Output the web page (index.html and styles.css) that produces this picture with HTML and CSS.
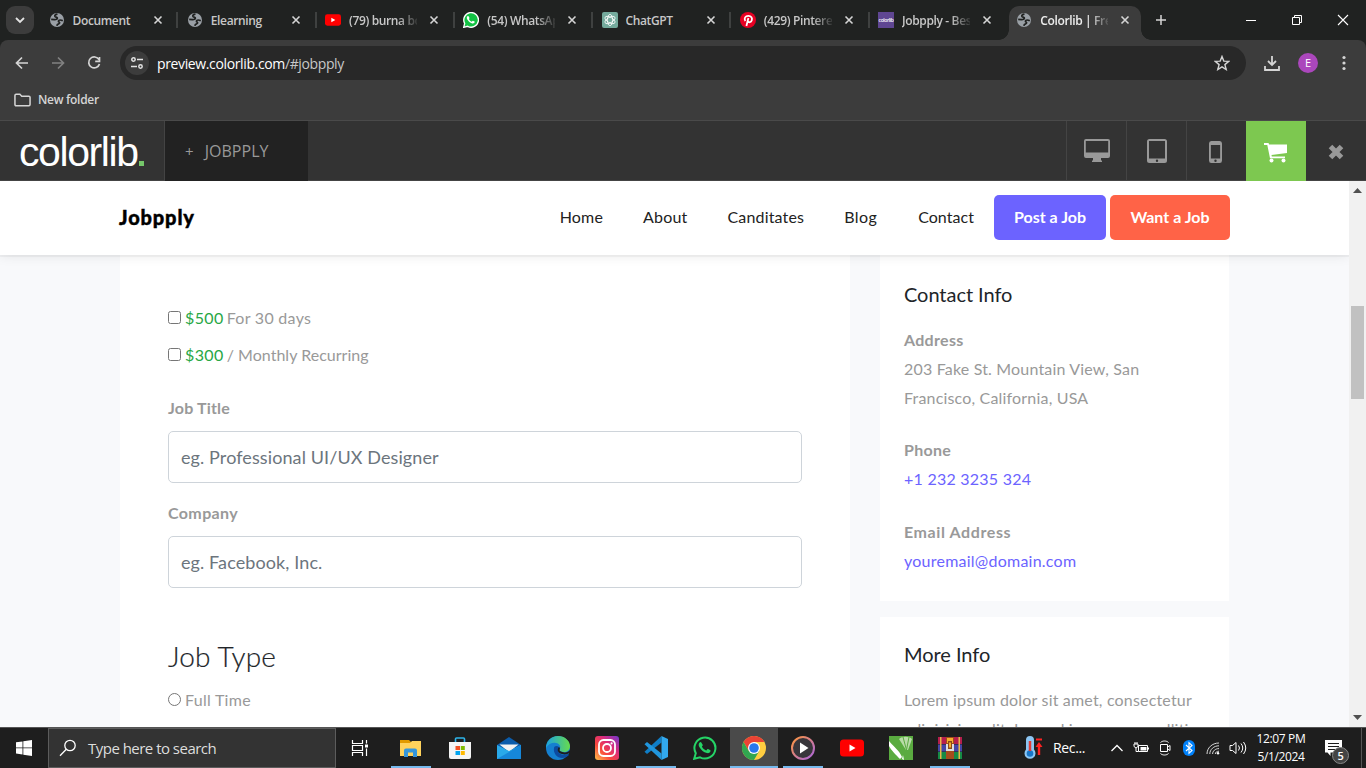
FILE: index.html
```html
<!DOCTYPE html>
<html lang="en">
<head>
<meta charset="utf-8">
<title>Colorlib | Jobpply</title>
<link rel="stylesheet" href="styles.css">
</head>
<body>
<svg width="0" height="0" class="defs">
  <symbol id="globe" viewBox="0 0 16 16"><circle cx="8" cy="8" r="7" fill="#9aa0a6"/><path d="M8.500 2.200c-2 .2-3 1.200-2.600 2.200.5 1 2.400.6 2.500 1.700 0 1-1.400 1.700-3 1.500L2.200 7.300M13.800 8.200c-1.200.6-1.800-.4-3-.2-1.500.2-1.800 1.600-.8 2.100 1.200.6.400 1.700-.8 2-.8.2-1.200.8-1.300 1.700" fill="none" stroke="#202221" stroke-width="1.700"/></symbol>
  <symbol id="x" viewBox="0 0 16 16"><path d="M4.500 4.500l7 7M11.500 4.500l-7 7" stroke="#d5d5d5" stroke-width="1.600"/></symbol>
  <symbol id="yt" viewBox="0 0 24 18"><rect y="0.500" width="24" height="17" rx="3.500" fill="#f00"/><path d="M9.500 5.500v7l6-3.500z" fill="#fff"/></symbol>
  <symbol id="phone" viewBox="0 0 24 24"><path d="M8.300 6.500c-.5-.9-1.100-.7-1.700-.1-1.200 1.200-1.200 3-.1 4.800 1.700 2.900 4.100 5 7.300 5.900 2 .5 3.600-.6 3.800-2.300 0-.6-2.300-1.900-2.900-1.700-.7.300-1 1.500-1.600 1.400-1.700-.6-3.300-2-4.100-3.700-.2-.6.900-1 .8-1.700z"/></symbol>
</svg>

<div class="screen">
  <header class="tabs">
    <button class="tab-search"><svg width="12" height="12" viewBox="0 0 12 12"><path d="M2 4l4 4 4-4" fill="none" stroke="#e3e3e3" stroke-width="1.800"/></svg></button>
    <div class="tab"><svg class="fav"><use href="#globe"/></svg><span>Document</span><svg class="close"><use href="#x"/></svg></div>
    <div class="tab"><svg class="fav"><use href="#globe"/></svg><span>Elearning</span><svg class="close"><use href="#x"/></svg></div>
    <div class="tab"><svg class="fav"><use href="#yt"/></svg><span class="fade">(79) burna boy</span><svg class="close"><use href="#x"/></svg></div>
    <div class="tab"><svg class="fav" viewBox="0 0 24 24"><path d="M1 23l1.500-6A11 11 0 1 1 7 21.500z" fill="#12c143" stroke="#fff" stroke-width="2"/><use href="#phone" fill="#fff"/></svg><span class="fade">(54) WhatsApp</span><svg class="close"><use href="#x"/></svg></div>
    <div class="tab"><svg class="fav" viewBox="0 0 16 16"><rect width="16" height="16" rx="2" fill="#74aa9c"/><g fill="none" stroke="#fff" stroke-width=".8"><ellipse cx="8" cy="8" rx="2.700" ry="5.600"/><ellipse cx="8" cy="8" rx="2.700" ry="5.600" transform="rotate(60 8 8)"/><ellipse cx="8" cy="8" rx="2.700" ry="5.600" transform="rotate(120 8 8)"/></g></svg><span>ChatGPT</span><svg class="close"><use href="#x"/></svg></div>
    <div class="tab"><svg class="fav" viewBox="0 0 16 16"><circle cx="8" cy="8" r="8" fill="#e60023"/><path d="M5.300 9C3.600 6.300 5.500 3.800 8.300 3.800c3 0 4.200 2.200 3.500 4.400-.7 2.400-3.200 2.500-3.900 1.200M8.400 6l-2 8" fill="none" stroke="#fff" stroke-width="1.800"/></svg><span class="fade">(429) Pinterest</span><svg class="close"><use href="#x"/></svg></div>
    <div class="tab"><span class="fav purple">colorlib</span><span class="fade">Jobpply - Best</span><svg class="close"><use href="#x"/></svg></div>
    <div class="tab active"><svg class="fav"><use href="#globe"/></svg><span class="fade">Colorlib | Free</span><svg class="close"><use href="#x"/></svg></div>
    <svg class="plus" viewBox="0 0 16 16"><path d="M8 3v10M3 8h10" stroke="#d5d5d5" stroke-width="1.500"/></svg>
    <div class="window">
      <svg viewBox="0 0 12 12"><path d="M1 6.500h10" stroke="#fff"/></svg>
      <svg viewBox="0 0 12 12"><path d="M1.500 3.500h7v7h-7zM3.500 3.500v-2h7v7h-2" fill="none" stroke="#fff"/></svg>
      <svg viewBox="0 0 12 12"><path d="M1 1l10 10M11 1L1 11" stroke="#fff" stroke-width="1.100"/></svg>
    </div>
  </header>

  <div class="toolbar">
    <svg class="tool" viewBox="0 0 16 16"><path d="M14 8H3M8 2.500L2.500 8 8 13.500" fill="none" stroke="#d5d5d5" stroke-width="1.700"/></svg>
    <svg class="tool" viewBox="0 0 16 16"><path d="M2 8h11M8 2.500L13.500 8 8 13.500" fill="none" stroke="#818181" stroke-width="1.700"/></svg>
    <svg class="tool" viewBox="0 0 16 16"><path d="M13 4.700A5.500 5.500 0 1 0 13.500 9M13.500 2v4.300H9.200" fill="none" stroke="#d5d5d5" stroke-width="1.700"/></svg>
    <div class="url">
      <span class="site"><svg width="14" height="14" viewBox="0 0 14 14"><g fill="none" stroke="#e3e3e3" stroke-width="1.500"><circle cx="3.500" cy="3.500" r="1.700"/><path d="M7 3.500h6M1 10.500h6"/><circle cx="10.500" cy="10.500" r="1.700"/></g></svg></span>
      <span class="address">preview.colorlib.com<i>/#jobpply</i></span>
      <svg class="star" viewBox="0 0 16 16"><path d="M8 1.500l1.800 4.600 5 .3-3.900 3.200 1.300 4.900L8 11.800l-4.200 2.700 1.300-4.900L1.200 6.400l5-.3z" fill="none" stroke="#d5d5d5" stroke-width="1.400"/></svg>
    </div>
    <svg class="download" viewBox="0 0 18 18"><path d="M9 2v8.500M5 7l4 4 4-4M2 12v4h14v-4" fill="none" stroke="#d5d5d5" stroke-width="1.800"/></svg>
    <span class="avatar">E</span>
    <svg class="more" viewBox="0 0 4 16"><g fill="#d5d5d5"><circle cx="2" cy="2.500" r="1.600"/><circle cx="2" cy="8" r="1.600"/><circle cx="2" cy="13.500" r="1.600"/></g></svg>
  </div>

  <div class="bookmarks"><svg width="17" height="14" viewBox="0 0 18 14"><path d="M1 2.200C1 1.400 1.400 1 2.200 1h4l2 2h7.600c.8 0 1.200.4 1.200 1.200v7.600c0 .8-.4 1.200-1.200 1.200H2.200C1.400 13 1 12.600 1 11.800z" fill="none" stroke="#d5d5d5" stroke-width="1.600"/></svg><span>New folder</span></div>

  <div class="preview-bar">
    <div class="logo">colorlib<i></i></div>
    <div class="theme"><b>+</b>JOBPPLY</div>
    <div class="devices">
      <span><svg width="26" height="24" viewBox="0 0 26 24"><path fill-rule="evenodd" d="M2 0h22a2 2 0 0 1 2 2v15a2 2 0 0 1-2 2h-7v2l1 1v1H8v-1l1-1v-2H2a2 2 0 0 1-2-2V2a2 2 0 0 1 2-2zm-.2 2v11.500h22.400V2z" fill="#999"/></svg></span>
      <span><svg width="20" height="24" viewBox="0 0 20 24"><path fill-rule="evenodd" d="M2.500 0h15A2.500 2.500 0 0 1 20 2.500v19a2.500 2.500 0 0 1-2.500 2.500h-15A2.500 2.500 0 0 1 0 21.500v-19A2.500 2.500 0 0 1 2.500 0zM2 2v17.500h16V2zm8 18.500a1.200 1.200 0 1 0 0 2.400 1.200 1.200 0 0 0 0-2.400z" fill="#999"/></svg></span>
      <span class="mobile"><svg width="13" height="22" viewBox="0 0 14 22" preserveAspectRatio="none"><path fill-rule="evenodd" d="M2.500 0h9A2.500 2.500 0 0 1 14 2.500v17a2.500 2.500 0 0 1-2.500 2.500h-9A2.500 2.500 0 0 1 0 19.500v-17A2.500 2.500 0 0 1 2.500 0zM2 4v13.500h10V4zm5 14.500a1.300 1.300 0 1 0 0 2.600 1.300 1.300 0 0 0 0-2.600z" fill="#999"/></svg></span>
      <span class="cart"><svg width="24" height="22" viewBox="0 0 24 22"><path d="M0 1h4.500l.7 1.500H23V11L7.500 13l.3 1.500H21v1.700H6L3.300 3H0z" fill="#fff"/><circle cx="7.500" cy="18.500" r="2" fill="#fff"/><circle cx="19.500" cy="18.500" r="2" fill="#fff"/></svg></span>
      <span class="shut"><svg width="18" height="18" viewBox="0 0 18 18"><path d="M3.500 3.500l11 11M14.500 3.500l-11 11" stroke="#999" stroke-width="5"/></svg></span>
    </div>
  </div>

  <div class="viewport">
    <main class="site-page">
      <nav class="nav">
        <strong>Jobpply</strong>
        <div class="links"><a>Home</a><a>About</a><a>Canditates</a><a class="l4">Blog</a><a class="l5">Contact</a></div>
        <a class="btn post">Post a Job</a><a class="btn want">Want a Job</a>
      </nav>
      <div class="content">
        <form class="form-card">
          <label class="option"><input type="checkbox"><em>$500</em><span class="days">For 30 days</span></label>
          <label class="option"><input type="checkbox"><em>$300</em><span>/ Monthly Recurring</span></label>
          <div class="field first"><label>Job Title</label><input type="text" placeholder="eg. Professional UI/UX Designer"></div>
          <div class="field"><label class="wide">Company</label><input type="text" placeholder="eg. Facebook, Inc."></div>
          <h2>Job Type</h2>
          <label class="option"><input type="radio"><span class="days">Full Time</span></label>
        </form>
        <aside class="side">
          <section class="card contact">
            <h3>Contact Info</h3>
            <b>Address</b>
            <p class="addr">203 Fake St. Mountain View, San Francisco, California, USA</p>
            <b>Phone</b>
            <p class="tel"><a>+1 232 3235 324</a></p>
            <b class="mail-label">Email Address</b>
            <p><a>youremail@domain.com</a></p>
          </section>
          <section class="card">
            <h3>More Info</h3>
            <p>Lorem ipsum dolor sit amet, consectetur<br>adipisicing elit. Ipsa ad iure porro mollitia</p>
          </section>
        </aside>
      </div>
    </main>
    <div class="scrollbar"><svg width="9" height="5" viewBox="0 0 9 5"><path d="M4.500 0L9 5H0z" fill="#505050"/></svg><i></i><svg width="9" height="5" viewBox="0 0 9 5"><path d="M4.500 5L9 0H0z" fill="#505050"/></svg></div>
  </div>

  <footer class="taskbar">
    <div class="start"><svg width="16" height="16" viewBox="0 0 16 16"><path d="M0 2.300l6.500-.9v6.100H0zM7.300 1.300L16 0v7.500H7.300zM0 8.300h6.500v6.200L0 13.600zM7.300 8.300H16V16l-8.700-1.300z" fill="#fff"/></svg></div>
    <div class="search"><svg width="18" height="18" viewBox="0 0 18 18"><circle cx="11" cy="6.500" r="5.200" fill="none" stroke="#fff" stroke-width="1.300"/><path d="M7.300 10.300L1 16.800" stroke="#fff" stroke-width="1.300"/></svg><span>Type here to search</span></div>
    <div class="app view"><svg width="18" height="16" viewBox="0 0 18 16"><path d="M1.500 0v3.500h10V0M1.500 16v-3.500h10V16M1.500 5.500h10v5h-10zM15.500 0v3.500M15.500 8.500V16" fill="none" stroke="#fff" stroke-width="1.200"/><rect x="14" y="4.500" width="3" height="3" fill="#fff"/></svg></div>
    <div class="apps">
      <div class="app open"><svg viewBox="0 0 24 24"><path d="M1 4h9l2 2v5H1z" fill="#e19a00"/><path d="M1 7h10l2-2h9v15H1z" fill="#ffd25c"/><path d="M5 21v-6.500a2 2 0 0 1 2-2h9a2 2 0 0 1 2 2V21h-4v-4.500H9V21z" fill="#3596db"/></svg></div>
      <div class="app"><svg viewBox="0 0 24 24"><path d="M7.500 7V3a1 1 0 0 1 1-1h7a1 1 0 0 1 1 1v4" fill="none" stroke="#2eb5ea" stroke-width="1.600"/><path d="M1 6h22v15a2 2 0 0 1-2 2H3a2 2 0 0 1-2-2z" fill="#f4f4f4"/><path d="M7.500 10H12v4H7.500z" fill="#f25022"/><path d="M12.800 10h4v4h-4z" fill="#7fba00"/><path d="M7.500 15H12v4H7.500z" fill="#00a4ef"/><path d="M12.800 15h4v4h-4z" fill="#ffb900"/></svg></div>
      <div class="app"><svg viewBox="0 0 24 24"><path d="M0 9l12-8 12 8v4H0z" fill="#0b5cab"/><path d="M2.500 8.500h19L12 16z" fill="#f2f2f2"/><path d="M0 9l12 6L24 9v14H0z" fill="#29a9ea"/><path d="M0 23L24 9v14z" fill="#1687d9"/></svg></div>
      <div class="app"><svg viewBox="0 0 24 24"><defs><linearGradient id="edge" x1="0" x2="1"><stop stop-color="#1ba3e2"/><stop offset="1" stop-color="#67db4c"/></linearGradient></defs><circle cx="12" cy="12" r="12" fill="#1580d0"/><path d="M0 12C0 5 5 0 12 0s12 5 12 10c0 4-3 6-6 6-3 0-5-1-5-2s2-2 1-4C12 5 3 6 0 12z" fill="url(#edge)"/><path d="M8 12c-1 5 3 10 8 10 3 0 5-1 7-3l-1-1c-5 2-10 0-10-4 0-1 1-2 1-3-2-2-5-1-5 1z" fill="#0c4ba0"/><path d="M13 11c-2 2-2 6 3 7 3 1 6 0 7-1l1 3v-6c-2 3-7 3-10 1-1-1 1-3-1-4z" fill="#1e1e1e"/></svg></div>
      <div class="app"><svg viewBox="0 0 24 24"><defs><linearGradient id="ig" x1="0" y1="1" x2="1" y2="0"><stop stop-color="#ffc24a"/><stop offset=".35" stop-color="#f9473d"/><stop offset=".65" stop-color="#d82b7e"/><stop offset="1" stop-color="#7038d0"/></linearGradient></defs><rect width="24" height="24" rx="3" fill="url(#ig)"/><g fill="none" stroke="#fff" stroke-width="1.800"><rect x="4" y="4" width="16" height="16" rx="4.500"/><circle cx="12" cy="12" r="4"/></g><circle cx="16.600" cy="7.400" r="1.100" fill="#fff"/></svg></div>
      <div class="app open"><svg viewBox="0 0 24 24"><path d="M17.500 0v6.500L3 18l-2.500-2.300z" fill="#0f7ec7"/><path d="M17.500 24v-6.500L3 6 .5 8.300z" fill="#2196dd"/><path d="M17.500 0L24 3v18l-6.500 3z" fill="#32a9ee"/></svg></div>
      <div class="app"><svg viewBox="0 0 24 24"><path d="M1.200 22.800l1.600-5.600A10.500 10.500 0 1 1 7 21.300z" fill="none" stroke="#25d366" stroke-width="2"/><use href="#phone" fill="#25d366"/></svg></div>
      <div class="app open current"><svg viewBox="0 0 24 24"><circle cx="12" cy="12" r="12" fill="#ffcd40"/><path d="M1.600 6a12 12 0 0 1 20.800 0H12L6.800 15z" fill="#ea4335"/><path d="M1.600 6A12 12 0 0 0 12 24l5.200-9H6.800z" fill="#31a650"/><circle cx="12" cy="12" r="6" fill="#fff"/><circle cx="12" cy="12" r="4.800" fill="#2878ed"/></svg></div>
      <div class="app open"><svg viewBox="0 0 24 24"><defs><linearGradient id="mp" x1="0" y1="0" x2="1" y2="1"><stop stop-color="#ff963c"/><stop offset="1" stop-color="#a864df"/></linearGradient></defs><circle cx="12" cy="12" r="11" fill="#38363b" stroke="url(#mp)" stroke-width="2"/><path d="M9 6.500v11l8.500-5.500z" fill="#fff"/></svg></div>
      <div class="app"><svg viewBox="0 0 24 18"><use href="#yt" width="24" height="18"/></svg></div>
      <div class="app"><svg viewBox="0 0 24 24"><path d="M0 0h24v24H0z" fill="#5aab40"/><path d="M0 5c3 4 10 9 13 16l-2 2C7 19 2 14 0 10zM13 23l1-4 1 5z" fill="#fff"/><path d="M10 3c3-3 10-3 13 0l-4 11h-2z" fill="#b9dba8"/><path d="M14 1l3.500 13M20 1l-2.500 13" stroke="#5aab40"/></svg></div>
      <div class="app open"><svg viewBox="0 0 24 24"><path d="M0 1h24v7H0z" fill="#b51f4d"/><path d="M0 8.500h24v7H0z" fill="#4545a6"/><path d="M0 16h24v7H0z" fill="#168a45"/><path d="M2 1h1.500v22H2zM20.500 1H22v22h-1.500z" fill="#e8b54b"/><path d="M8 1h8v22H8z" fill="#a64b1d"/><path d="M9 2h6v5H9z" fill="#f6ae2d"/><path d="M8 8h8v7H8z" fill="#ddd"/><path d="M10 5h4v8h-4z" fill="#8a4b18"/><path d="M11 6.500h2v5h-2z" fill="#f6ae2d"/></svg></div>
    </div>
    <div class="weather"><svg width="20" height="24" viewBox="0 0 20 24"><path d="M2 4a4 4 0 0 1 8 0v9.500a5.500 5.500 0 1 1-8 0z" fill="#8dc6f3"/><circle cx="6" cy="17.500" r="3.300" fill="#1775c8"/><path d="M6 5v10" stroke="#e33b35" stroke-width="2.500"/><path d="M12 3.500h6" stroke="#f22" stroke-width="2"/><path d="M15 6l3.500 5h-2.300v8h-2.400v-8h-2.300z" fill="#f22"/></svg><span>Rec...</span></div>
    <div class="tray">
      <svg viewBox="0 0 16 16"><path d="M2.500 11L8 5.500l5.500 5.500" fill="none" stroke="#fff" stroke-width="1.300"/></svg>
      <svg viewBox="0 0 16 16"><path d="M5.500 5.500h9v6h-9zM1 4h4v2.500L3 8 1 6.500zM2 4V2M4 4V2M3 8v3.500h2.500M15.500 7.500v2" fill="none" stroke="#fff"/><path d="M7.500 7h6v3.500h-6z" fill="#fff"/></svg>
      <svg viewBox="0 0 16 16"><path d="M3.500 4.500h7v7h-7zM10.500 7l2.500-1.500v5L10.500 9M3.500 2.500c2-2 6-2 8 0M3.500 13.500c2 2 6 2 8 0" fill="none" stroke="#fff"/></svg>
      <svg viewBox="0 0 16 16"><rect x="2" y="0" width="12" height="16" rx="6" fill="#0082fc"/><path d="M5 5l6 5.500-3 2.800V2.700l3 2.800L5 11" fill="none" stroke="#fff" stroke-width="1.100"/></svg>
      <svg viewBox="0 0 16 16"><path d="M2 14C2 8 7 3 14 3M4.800 14c0-4.500 4-8.200 9.200-8.200M7.600 14c0-3 2.700-5.400 6.400-5.400M10.300 14c0-1.600 1.500-2.800 3.700-2.800" fill="none" stroke="#d8d8d8"/><circle cx="13" cy="13.200" r="1.200" fill="#fff"/></svg>
      <svg viewBox="0 0 18 16"><path d="M1 5.500h2.500L7 2.500v11l-3.500-3H1zM9.500 5.500q2 2.500 0 5M12 3.500q3.500 4.500 0 9M14.500 2q4.500 6 0 12" fill="none" stroke="#fff"/></svg>
    </div>
    <div class="clock"><span>12:07 PM</span><span>5/1/2024</span></div>
    <div class="notice"><svg width="17" height="16" viewBox="0 0 17 16"><path d="M0 0h17v12.500H5.500V16L2.500 12.500H0z" fill="#fff"/><path d="M3 3.500h11M3 6.500h11M3 9.500h7" stroke="#1e1e1e" stroke-width="1.200"/></svg><i>5</i></div>
    <div class="desk"></div>
  </footer>
</div>
</body>
</html>
```
FILE: styles.css
```css
* { box-sizing: border-box; }
body { margin: 0; background: #1e1e1e; }
svg { flex: none; display: block; }
.defs { position: absolute; }
.screen { width: 1366px; height: 768px; display: flex; flex-direction: column; overflow: hidden; }

/* browser tabs */
.tabs { height: 40px; flex: none; display: flex; align-items: center; background: #202221; font: 600 12px "Open Sans", sans-serif; letter-spacing: -.36px; color: #c7c7c7; }
.tab-search { width: 28px; height: 28px; margin: 0 5px 0 6px; padding: 8px; border: 0; border-radius: 9px; background: #3c3c3c; }
.tab { position: relative; width: 138.250px; height: 40px; padding-left: 9.500px; display: flex; align-items: center; flex: none; }
.tab > * { position: relative; }
.tab .fav { width: 16px; height: 16px; margin-right: 8px; }
.tab > span:not(.fav) { width: 68px; overflow: hidden; white-space: nowrap; }
.tab .fade { -webkit-mask-image: linear-gradient(90deg, #000 72%, transparent 104%); mask-image: linear-gradient(90deg, #000 72%, transparent 104%); }
.tab .close { width: 16px; height: 16px; margin-left: 9px; }
.tab:not(.active)::after { content: ""; position: absolute; right: -1px; top: 12px; width: 2px; height: 16px; background: #3f4140; }
.tab:nth-last-child(4)::after { display: none; }
.purple { background: #5f4692; color: #fff; font-size: 5px; line-height: 16px; letter-spacing: -.4px; text-align: center; overflow: hidden; }
.active { color: #eee; }
.active::before { content: ""; position: absolute; left: 2px; right: 4px; top: 6px; bottom: 0; border-radius: 10px 10px 0 0; background: #3c3c3c; }
.active::after { content: ""; position: absolute; left: -8px; right: -6px; bottom: 0; height: 10px; background: radial-gradient(circle at 0 0, transparent 9.500px, #3c3c3c 10px) left / 10px 10px no-repeat, radial-gradient(circle at 100% 0, transparent 9.500px, #3c3c3c 10px) right / 10px 10px no-repeat; }
.plus { width: 16px; height: 16px; margin-left: 8px; }
.window { margin-left: auto; display: flex; gap: 34px; padding-right: 17px; }
.window svg { width: 12px; height: 12px; }

/* address bar */
.toolbar { position: relative; z-index: 0; height: 46px; flex: none; display: flex; align-items: center; background: #3c3c3c; padding-left: 14px; border-radius: 8px 8px 0 0; box-shadow: 0 -8px 0 #202221; clip-path: inset(0); }
.tool { width: 16px; height: 16px; margin-right: 20px; }
.toolbar .tool:nth-child(3) { margin-right: 18px; }
.url { width: 1126px; height: 34px; border-radius: 17px; background: #282828; display: flex; align-items: center; padding: 0 16px 0 5px; }
.site { width: 24px; height: 24px; border-radius: 12px; background: #3c3c3c; padding: 5px; }
.address { margin-left: 8px; font: 14px "Open Sans", sans-serif; letter-spacing: -.37px; color: #fff; }
.address i { font-style: normal; color: #c7c7c7; }
.star { width: 16px; height: 16px; margin-left: auto; }
.download { width: 18px; height: 18px; margin-left: 17px; }
.avatar { width: 20px; height: 20px; margin-left: 17px; border-radius: 10px; background: #ab47bc; color: #fff; font: 11px/20px "Open Sans", sans-serif; text-align: center; }
.more { width: 4px; height: 16px; margin-left: 24px; }
.bookmarks { height: 35px; flex: none; display: flex; align-items: center; gap: 7px; padding: 0 0 7px 14px; background: #3c3c3c; border-bottom: 1px solid #4a4a4a; font: 600 12px "Open Sans", sans-serif; letter-spacing: -.3px; color: #d5d5d5; }

/* theme preview bar */
.preview-bar { height: 60px; flex: none; display: flex; background: #333; border-bottom: 1px solid #444; }
.logo { width: 165px; padding-left: 19px; border-right: 1px solid #444; display: flex; align-items: baseline; color: #fff; font: 41px/62px "Liberation Sans", Arial, sans-serif; letter-spacing: -1.400px; }
.logo i { width: 5px; height: 5px; background: #75c76a; margin-left: 1px; }
.theme { width: 143px; height: 60px; background: #222; color: #999; padding-left: 20px; font: 16px/60px "Open Sans", sans-serif; letter-spacing: .05px; }
.theme b { font-weight: 400; margin-right: 11px; font-size: 15px; }
.devices { margin-left: auto; display: flex; }
.devices span { width: 60px; height: 60px; display: grid; place-items: center; border-left: 1px solid #444; }
.devices .mobile { padding: 2px 2px 0 0; }
.devices .cart { background: #7dc850; border: 0; padding-top: 3px; }
.devices .shut { border: 0; padding-top: 2px; }

/* page */
.viewport { height: 546px; flex: none; display: flex; overflow: hidden; }
.site-page { width: 1349px; height: 546px; overflow: hidden; background: #f8f9fb; font: 16px/29px Lato, sans-serif; letter-spacing: .18px; color: #999; }
.nav { position: relative; height: 74px; padding: 0 119px 1px; display: flex; align-items: center; background: #fff; box-shadow: 0 2px 0 rgba(0, 0, 0, .035), 0 0 12px rgba(0, 0, 0, .1); color: #222; }
.nav strong { font-size: 20px; font-weight: 900; letter-spacing: .85px; color: #000; padding-bottom: 1px; -webkit-text-stroke: .4px #000; }
.links { margin-left: auto; display: flex; padding-bottom: 3px; }
.links a { padding: 0 20px; }
.links .l4 { letter-spacing: .4px; }
.links .l5 { letter-spacing: .05px; padding-left: 21px; }
.btn { height: 45px; line-height: 43px; border-radius: 5px; color: #fff; font-weight: 700; letter-spacing: 0; text-align: center; }
.post { width: 112px; background: #6c63ff; margin-right: 4px; }
.want { width: 120px; background: #ff6347; }
.content { display: flex; align-items: flex-start; gap: 30px; padding-left: 120px; }
.form-card { width: 730px; height: 480px; background: #fff; padding: 48px 48px 0; }
.option { display: flex; align-items: center; height: 29px; margin-bottom: 8px; }
.option span { letter-spacing: .02px; }
.option input { width: 13px; height: 13px; margin: 0 4px 0 0; }
.option em { font-style: normal; color: #28a745; letter-spacing: .4px; margin-right: 3px; }
.option .days { letter-spacing: .28px; }
.field { margin-top: 16px; }
.field.first { margin-top: 25px; }
.field label { display: block; height: 29px; line-height: 27px; font-weight: 700; margin-bottom: 8px; }
.field .wide { letter-spacing: .38px; }
.field input { display: block; width: 634px; height: 52px; border: 1px solid #ced4da; border-radius: 5px; padding: 0 12px 1px; font: 18px Lato, sans-serif; letter-spacing: .1px; background: #fff; }
.field input::placeholder { color: #6c757d; opacity: 1; }
h2 { margin: 47px 0 8px; font: 300 28px/42px Lato, sans-serif; color: #212529; -webkit-text-stroke: .2px #212529; }
h3 { margin: 0 0 16px; font: 400 20px/30px Lato, sans-serif; letter-spacing: -.05px; color: #212529; }
.side { width: 349px; display: flex; flex-direction: column; gap: 16px; }
.card { background: #fff; padding: 22px 24px; white-space: nowrap; }
.contact { padding: 24px 24px 26px; white-space: normal; }
.card b { display: block; letter-spacing: .3px; }
.card .mail-label { letter-spacing: .6px; }
.card p { margin: 0; }
.card .addr { margin-bottom: 23px; }
.card .tel { margin-bottom: 24px; }
.card a { color: #6c63ff; letter-spacing: .24px; }
.scrollbar { width: 17px; background: #f1f1f1; display: flex; flex-direction: column; align-items: center; padding: 7px 0; }
.scrollbar i { width: 13px; height: 93px; margin: 113px 0 auto; background: #c1c1c1; }

/* taskbar */
.taskbar { height: 41px; flex: none; display: flex; background: #1e1e1e; border-top: 1px solid #555; color: #fff; font: 12px/18px "Open Sans", sans-serif; letter-spacing: -.36px; }
.start { width: 48px; display: grid; place-items: center; }
.search { width: 288px; background: #333; border: 1px solid #5c5c5c; display: flex; align-items: center; gap: 11px; padding-left: 10px; font-size: 15px; letter-spacing: -.52px; color: #ddd; }
.app { position: relative; width: 48px; height: 40px; display: grid; place-items: center; }
.view { margin-right: 3px; }
.apps { display: flex; gap: 1px; }
.apps svg { width: 24px; height: 24px; }
.open::after { content: ""; position: absolute; left: 4px; right: 4px; bottom: 0; height: 2px; background: #76b9ed; }
.current { background: #4a4a4a; }
.current::after { left: 0; right: 0; }
.weather { margin-left: 50px; display: flex; align-items: center; gap: 9px; width: 85px; font-size: 14px; white-space: nowrap; }
.tray { display: flex; align-items: center; gap: 8px; }
.tray svg { width: 16px; height: 16px; }
.tray svg:last-child { width: 18px; }
.clock { width: 54px; margin-left: 7px; display: flex; flex-direction: column; align-items: center; padding-top: 2px; }
.notice { position: relative; width: 36px; padding: 12px 0 0 17px; }
.notice i { position: absolute; left: 24px; top: 19px; width: 17px; height: 17px; border: 1px solid #888; border-radius: 9px; background: #444; font: 600 11px/15px "Open Sans", sans-serif; text-align: center; }
.desk { margin-left: auto; width: 5px; border-left: 1px solid #555; }
```
